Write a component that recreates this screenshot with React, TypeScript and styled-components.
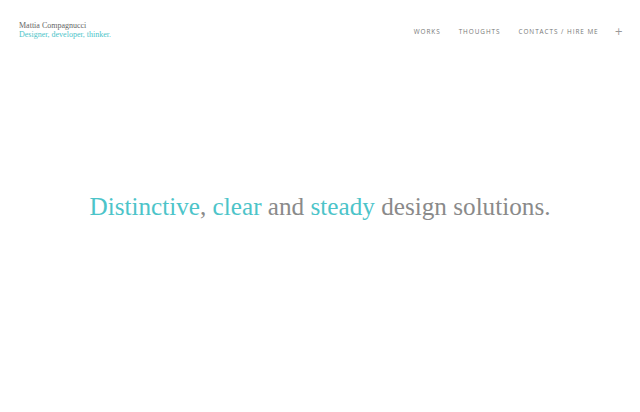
import React from "react";
import styled, { createGlobalStyle } from "styled-components";

const Global = createGlobalStyle`
  html, body { margin: 0; padding: 0; background: #fff; }
  body { font-family: "Liberation Serif", serif; }
`;

const Page = styled.div`
  height: 412px;
  display: flex;
  flex-direction: column;
`;

const Header = styled.header`
  display: flex;
  justify-content: space-between;
  align-items: flex-start;
  padding: 21px 17px 0 19px;
`;

const Brand = styled.div`
  font-family: "Liberation Serif", serif;
  font-size: 8px;
  line-height: 9px;
`;

const Name = styled.div`
  color: #666;
`;

const Tagline = styled.div`
  color: #4cc4c9;
`;

const Nav = styled.nav`
  display: flex;
  align-items: center;
  gap: 18px;
  padding-top: 6px;
`;

const NavLink = styled.a`
  font-family: "Open Sans", sans-serif;
  font-size: 6.4px;
  letter-spacing: 0.95px;
  color: #777;
  text-decoration: none;
`;

const Plus = styled.span`
  font-family: "DejaVu Sans", sans-serif;
  font-size: 10px;
  color: #999;
  margin-left: -2px;
  line-height: 7px;
`;

const Hero = styled.main`
  flex: 1;
  display: flex;
  justify-content: center;
  padding-top: 154px;
`;

const Headline = styled.h1`
  margin: 0;
  font-family: "Liberation Serif", serif;
  font-weight: normal;
  font-size: 25.2px;
  color: #8a8a8a;
`;

const Accent = styled.span`
  color: #4cc4c9;
`;

export default function App() {
  return (
    <>
      <Global />
      <Page>
        <Header>
          <Brand>
            <Name>Mattia Compagnucci</Name>
            <Tagline>Designer, developer, thinker.</Tagline>
          </Brand>
          <Nav>
            <NavLink href="#">WORKS</NavLink>
            <NavLink href="#">THOUGHTS</NavLink>
            <NavLink href="#">CONTACTS / HIRE ME</NavLink>
            <Plus>+</Plus>
          </Nav>
        </Header>
        <Hero>
          <Headline>
            <Accent>Distinctive</Accent>, <Accent>clear</Accent> and{" "}
            <Accent>steady</Accent> design solutions.
          </Headline>
        </Hero>
      </Page>
    </>
  );
}
